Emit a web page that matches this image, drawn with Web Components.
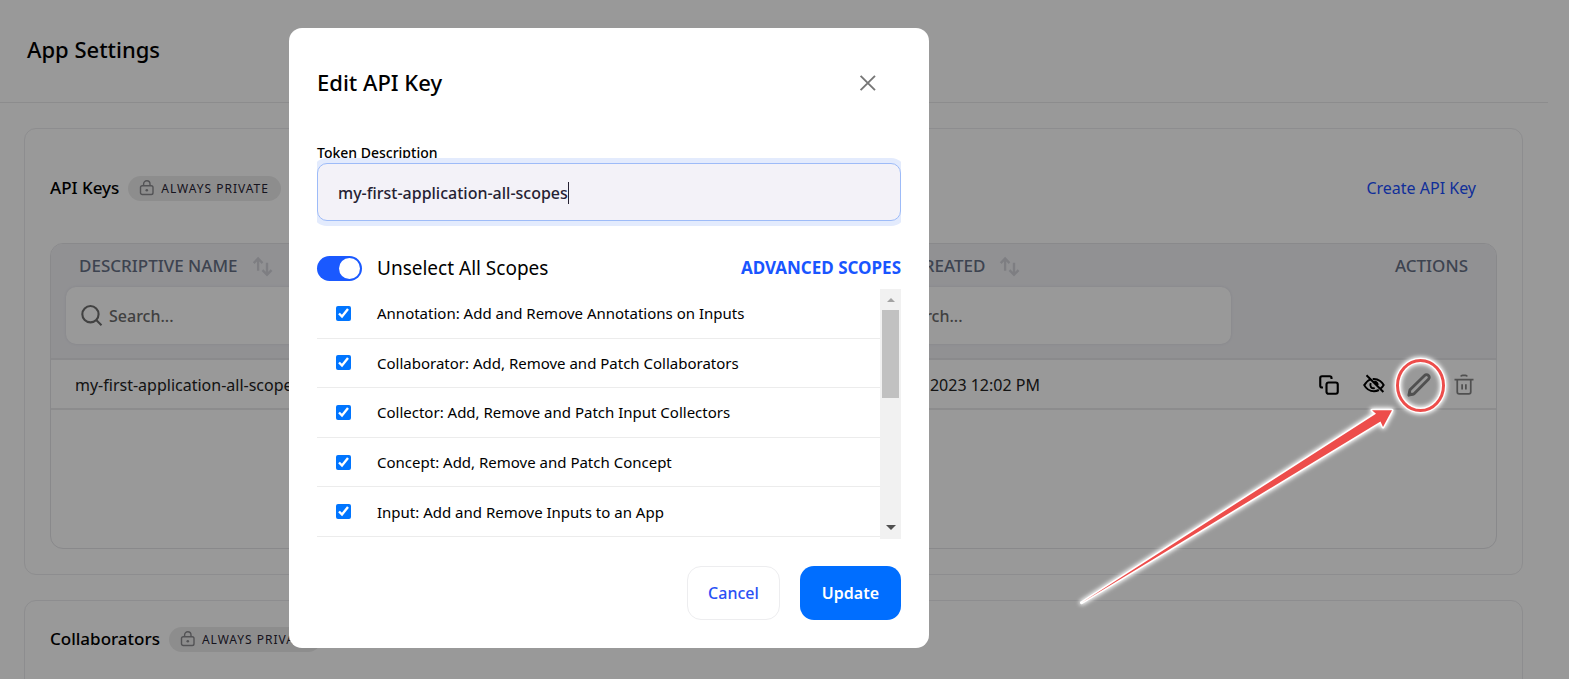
<!DOCTYPE html>
<html lang="en">
<head>
<meta charset="utf-8">
<meta name="viewport" content="width=device-width, initial-scale=1">
<title>App Settings</title>
<style>
  html, body { height: 100%; }
  body { margin: 0; overflow: hidden; background: #fff; color: #000; font: 400 16px/24px "Noto Sans", "Open Sans", sans-serif; }
</style>
</head>
<body>
<app-page></app-page>

<script>
const define = (name, html, setup) => {
  const template = document.createElement('template');
  template.innerHTML = '<style>*{box-sizing:border-box}</style>' + html;
  customElements.define(name, class extends HTMLElement {
    connectedCallback() {
      if (this.shadowRoot) return;
      this.attachShadow({ mode: 'open' }).append(template.content.cloneNode(true));
      if (setup) setup(this, this.shadowRoot);
    }
  });
};

/* Icons */
const ICONS = {
  lock: '<g fill="none" stroke="currentColor" stroke-width="1.4"><rect x="1.500" y="5.800" width="12.500" height="8.700" rx="1.8"/><path d="M4.600 5.800V3.900a3.200 3.200 0 0 1 6.400 0v1.900"/></g><circle cx="7.800" cy="10.200" r="1.300" fill="currentColor"/>',
  sort: '<g fill="none" stroke="currentColor" stroke-width="2"><path d="M4.300 11.500V1.500M.6 5.200 4.300 1.200l3.700 4M11.800 4.800v10M8 11l3.800 4L15.600 11"/></g>',
  search: '<g fill="none" stroke="currentColor" stroke-width="1.600"><circle cx="7.200" cy="7" r="6.200"/><path d="m11.600 11.500 4 4"/></g>',
  copy: '<g fill="none" stroke="currentColor" stroke-width="1.700"><rect x="6" y="6" width="9" height="9" rx="1.600"/><path d="M3.200 10H2.400A1.400 1.400 0 0 1 1 8.600V2.400A1.400 1.400 0 0 1 2.400 1h6.200A1.400 1.400 0 0 1 10 2.400v.8"/></g>',
  eyeoff: '<g fill="none" stroke="currentColor" stroke-width="1.6"><path d="M5.200 3.500C2.500 4.400.7 7.300.2 8.100c.8 1.500 3.500 4.900 7.800 4.900 1.500 0 2.800-.4 3.900-1M7 3.200c4.900-.5 7.900 3.300 8.700 4.800-.5.900-1.300 1.900-2.300 2.700M5.400 6.500C4.200 9 6 11 8.600 10.500M8.200 5.300c1.700.1 2.700 1.300 2.700 2.700M2 .2 15.500 13.600"/></g>',
  pencil: '<path fill="none" stroke="currentColor" stroke-width="1.900" stroke-linejoin="round" d="M1.200 14.800 2 11.200 11.700 1.600a1.800 1.800 0 0 1 2.600 2.600L4.700 13.900Z"/><path d="m.600 15.500.700-4 3.300 3.300Z" fill="currentColor"/>',
  trash: '<path fill="none" stroke="currentColor" stroke-width="1.400" d="M.4 3.600h15.200M2.600 3.600v9.900c0 .9.600 1.500 1.500 1.500h7.800c.9 0 1.500-.6 1.500-1.500V3.600M5.500 1.200c.2-.7.700-.9 1.300-.9h2.400c.6 0 1.100.2 1.300.9M6.500 7.300v4.200M9.500 7.300v4.200"/>',
  close: '<path fill="none" stroke="currentColor" stroke-width="1.900" d="m.6.8 14.400 14.400M15 .8.6 15.200"/>'
};
define('ui-icon', `
<style>:host{display:inline-flex;flex:none;width:var(--size,16px);height:var(--size,16px)} svg{width:100%;height:100%;overflow:visible}</style>
<svg viewBox="0 0 16 16" aria-hidden="true"></svg>`,
(el, root) => { root.querySelector('svg').innerHTML = ICONS[el.getAttribute('name')]; });

/* Pill badge with a lock */
define('privacy-badge', `
<style>
:host{display:inline-flex;align-items:center;gap:6px;height:25px;padding:0 12px 0 11px;border-radius:13px;background:#ececec;color:#262233;font:400 12px/25px "Noto Sans",sans-serif;letter-spacing:1px;white-space:nowrap}
ui-icon{color:#8a8a8e}
</style><ui-icon name="lock"></ui-icon><slot></slot>`);

/* Bordered card with a title row */
define('settings-card', `
<style>
:host{display:block;border:1px solid #ececee;border-radius:12px;padding:0 25px 25px}
header{display:flex;align-items:center;gap:9px;height:var(--head,114px);padding-top:4px}
h2{margin:0;font:500 17px/24px "Noto Sans",sans-serif}
.end{margin-left:auto}
</style>
<header><h2></h2><slot name="badge"></slot><div class="end"><slot name="action"></slot></div></header>
<slot></slot>`,
(el, root) => { root.querySelector('h2').textContent = el.getAttribute('heading'); });

/* Search box in the table head */
define('search-field', `
<style>
:host{display:block}
label{display:flex;align-items:center;gap:7px;height:57px;padding:0 15px;border-radius:10px;background:#fff;box-shadow:0 0 3px rgba(60,60,90,.12);color:#6e6e6e;--size:21px}
input{flex:1;min-width:0;border:0;padding:0;background:none;outline:0;font:500 16px/24px "Noto Sans",sans-serif;color:#333}
input::placeholder{color:#6c6c6c;opacity:1}
</style>
<label><ui-icon name="search"></ui-icon><input type="search" placeholder="Search..." aria-label="Search"></label>`);

/* Table of keys */
define('key-table', `
<style>
:host{display:block;height:306px;border:1px solid #e4e4e8;border-radius:13px;overflow:hidden}
table{width:100%;border-collapse:separate;border-spacing:0;table-layout:fixed;text-align:left}
th{height:116px;padding:9px 15px 0;vertical-align:top;background:#f2f2f6;border-bottom:2px solid #e6e6ea;color:#667085;font:500 17px/26px "Noto Sans",sans-serif}
td{height:50px;padding:2px 24px 0;border-bottom:2px solid #e9e9ec;color:#222}
.date{width:406px}
td.date{padding-left:35px}
.actions{width:250px;text-align:right}
th.actions{padding-right:28px}
td.actions{padding-right:22px}
.label{display:flex;align-items:center;gap:15px;padding-left:13px;margin-bottom:8px;--size:19px}
.date .label{padding-left:58px}
.label ui-icon{color:#d2d3d9}
.tools{display:flex;justify-content:flex-end;align-items:center;gap:25px;--size:20px;color:#000}
button{display:flex;border:0;padding:0;background:none;color:inherit;cursor:pointer}
.soft{color:#868686}
.big{--size:24px;margin:0 -2px}
</style>
<table>
<thead><tr>
<th scope="col"><div class="label">DESCRIPTIVE NAME <ui-icon name="sort"></ui-icon></div><search-field></search-field></th>
<th scope="col" aria-label="Key"></th>
<th scope="col" class="date"><div class="label">CREATED <ui-icon name="sort"></ui-icon></div><search-field></search-field></th>
<th scope="col" class="actions">ACTIONS</th>
</tr></thead>
<tbody><tr>
<td>my-first-application-all-scopes</td><td></td><td class="date">June 3, 2023 12:02 PM</td>
<td class="actions"><div class="tools">
<button aria-label="Copy"><ui-icon name="copy"></ui-icon></button>
<button aria-label="Show key"><ui-icon name="eyeoff"></ui-icon></button>
<button class="soft big" aria-label="Edit"><ui-icon name="pencil"></ui-icon></button>
<button class="soft" aria-label="Delete"><ui-icon name="trash"></ui-icon></button>
</div></td>
</tr></tbody>
</table>`);

/* Switch */
define('toggle-switch', `
<style>
:host{display:inline-flex}
input{appearance:none;display:flex;align-items:center;justify-content:flex-end;width:45px;height:25px;margin:0;padding:2px;border-radius:13px;background:#1a59ff}
input::before{content:"";width:21px;height:21px;border-radius:50%;background:#fff}
input:not(:checked){justify-content:flex-start;background:#bbb}
</style><input type="checkbox" role="switch" aria-label="Unselect All Scopes" checked>`);

/* One row of the scope list */
define('scope-row', `
<style>
:host{display:flex;border-bottom:1px solid #ececec}
label{display:flex;align-items:center;gap:26px;flex:1;padding-left:19px;font:400 15px/22px "Noto Sans",sans-serif}
input{width:15px;height:15px;margin:0;accent-color:#0075ff}
</style><label><input type="checkbox" checked><span><slot></slot></span></label>`);

define('scope-list', `
<style>
:host{display:flex;height:250px}
.rows{flex:1;display:grid;grid-auto-rows:1fr;height:248px}
.bar{display:flex;flex-direction:column;align-items:center;width:21px;background:#f1f1f1}
i{width:0;height:0;border:4px solid transparent}
.up{border-top:0;border-bottom-color:#a3a3a3;margin:9px 0 8px}
.down{border-width:5px;border-bottom:0;border-top-color:#505050;margin:auto 0 9px}
.thumb{width:17px;height:88px;background:#c1c1c1}
</style>
<div class="rows"><slot></slot></div>
<div class="bar" aria-hidden="true"><i class="up"></i><div class="thumb"></div><i class="down"></i></div>`);

/* Focused text box */
define('token-field', `
<style>
:host{display:block}
label{display:block;font:500 14px/20px "Noto Sans",sans-serif}
.clip{margin-top:-5px;padding:5px 0;overflow:hidden;position:relative}
.box{display:flex;align-items:center;height:58px;padding:2px 20px 0;border:1px solid #9dbbf8;border-radius:10px;background:#f3f2f8;box-shadow:0 0 0 5px #e3ebfd}
input{field-sizing:content;max-width:100%;border:0;padding:0;outline:0;background:none;color:#262233;font:500 16px/24px "Noto Sans",sans-serif}
.caret{width:1px;height:22px;background:#262233}
</style>
<label for="token">Token Description</label>
<div class="clip"><div class="box"><input id="token" type="text" value="my-first-application-all-scopes"><span class="caret"></span></div></div>`);

define('edit-dialog', `
<style>
:host{display:block;width:640px;max-width:100%;padding:28px;border-radius:13px;background:#fff}
header,.all,footer{display:flex;align-items:center}
header{justify-content:space-between;height:54px}
h1{margin:0;padding-bottom:2px;font:500 22px/30px "Noto Sans",sans-serif}
button{font:500 16px/24px "Noto Sans",sans-serif;cursor:pointer}
.close{display:flex;margin-right:25px;padding:0;border:0;background:none;color:#777}
token-field{margin-top:33px}
.all{gap:15px;height:30px;margin-top:27px}
.all span{font:400 19px/26px "Noto Sans",sans-serif}
a{margin-left:auto;font:700 17px/24px "Noto Sans",sans-serif;color:#1955ff;text-decoration:none}
scope-list{margin-top:6px}
footer{justify-content:flex-end;gap:20px;margin-top:27px}
footer button{height:54px;padding:0 20px;border:1px solid #ededef;border-radius:14px;background:#fff;color:#2a51f5}
footer .primary{padding:0 22px;border:0;background:#006eff;color:#fff;font-weight:600}
</style>
<header><h1>Edit API Key</h1><button class="close" aria-label="Close"><ui-icon name="close"></ui-icon></button></header>
<token-field></token-field>
<div class="all"><toggle-switch></toggle-switch><span>Unselect All Scopes</span><a href="#advanced">ADVANCED SCOPES</a></div>
<scope-list>
<scope-row>Annotation: Add and Remove Annotations on Inputs</scope-row>
<scope-row>Collaborator: Add, Remove and Patch Collaborators</scope-row>
<scope-row>Collector: Add, Remove and Patch Input Collectors</scope-row>
<scope-row>Concept: Add, Remove and Patch Concept</scope-row>
<scope-row>Input: Add and Remove Inputs to an App</scope-row>
</scope-list>
<footer><button>Cancel</button><button class="primary">Update</button></footer>`);

/* Red ring and arrow drawn over the page, pointing at the edit button */
define('callout-arrow', `
<style>
:host{position:absolute;top:340px;right:109px;width:400px;height:280px;pointer-events:none}
svg{display:block;filter:drop-shadow(0 0 2px #fff) drop-shadow(0 0 2px rgba(255,255,255,.7))}
</style>
<svg width="400" height="280" viewBox="1060 340 400 280" aria-hidden="true">
<g fill="none"><ellipse cx="1420.500" cy="385.500" rx="23" ry="25" stroke="#fff" stroke-width="5.500"/><ellipse cx="1420.500" cy="385.500" rx="23" ry="25" stroke="#ed4d4b" stroke-width="3"/></g>
<path d="M1081.500 602.700 1376 413.800 1372 410.300 1392 410.300 1383 427 1380.500 421.500Z" fill="#ed4d4b" stroke="#fff" stroke-width="3" stroke-linejoin="round" paint-order="stroke"/>
</svg>`);

define('app-page', `
<style>
:host{display:block;position:relative;height:100%;overflow:hidden}
.page{margin-right:21px}
.top{display:flex;align-items:center;height:103px;padding:0 27px 5px;border-bottom:1px solid #e9e9eb}
h1{margin:0;font:500 22px/30px "Noto Sans",sans-serif}
main{display:flex;flex-direction:column;gap:25px;padding:25px 25px 25px 24px}
.create{margin-right:21px;color:#1b4fff;text-decoration:none;font:400 16px/24px "Noto Sans",sans-serif}
.second{--head:72px}
.shade{position:absolute;inset:0;padding:28px 351px 0 0;background:rgba(0,0,0,.4);display:flex;justify-content:center;align-items:flex-start}
</style>
<div class="page">
<div class="top"><h1>App Settings</h1></div>
<main>
<settings-card heading="API Keys"><privacy-badge slot="badge">ALWAYS PRIVATE</privacy-badge><a class="create" slot="action" href="#create">Create API Key</a><key-table></key-table></settings-card>
<settings-card class="second" heading="Collaborators"><privacy-badge slot="badge">ALWAYS PRIVATE</privacy-badge></settings-card>
</main>
</div>
<div class="shade"><edit-dialog role="dialog" aria-label="Edit API Key"></edit-dialog></div>
<callout-arrow></callout-arrow>`);
</script>
</body>
</html>
